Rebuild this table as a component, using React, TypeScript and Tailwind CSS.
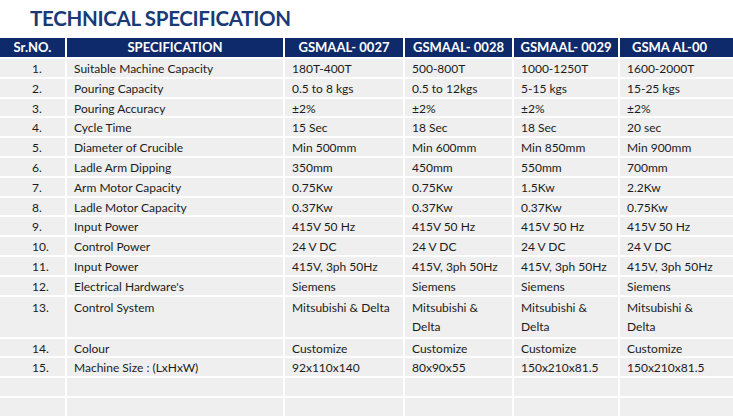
const rows: [string, string, string, string, string, string][] = [
  ["1.", "Suitable Machine Capacity", "180T-400T", "500-800T", "1000-1250T", "1600-2000T"],
  ["2.", "Pouring Capacity", "0.5 to 8 kgs", "0.5 to 12kgs", "5-15 kgs", "15-25 kgs"],
  ["3.", "Pouring Accuracy", "±2%", "±2%", "±2%", "±2%"],
  ["4.", "Cycle Time", "15 Sec", "18 Sec", "18 Sec", "20 sec"],
  ["5.", "Diameter of Crucible", "Min 500mm", "Min 600mm", "Min 850mm", "Min 900mm"],
  ["6.", "Ladle Arm Dipping", "350mm", "450mm", "550mm", "700mm"],
  ["7.", "Arm Motor Capacity", "0.75Kw", "0.75Kw", "1.5Kw", "2.2Kw"],
  ["8.", "Ladle Motor Capacity", "0.37Kw", "0.37Kw", "0.37Kw", "0.75Kw"],
  ["9.", "Input Power", "415V 50 Hz", "415V 50 Hz", "415V 50 Hz", "415V 50 Hz"],
  ["10.", "Control Power", "24 V DC", "24 V DC", "24 V DC", "24 V DC"],
  ["11.", "Input Power", "415V, 3ph 50Hz", "415V, 3ph 50Hz", "415V, 3ph 50Hz", "415V, 3ph 50Hz"],
  ["12.", "Electrical Hardware's", "Siemens", "Siemens", "Siemens", "Siemens"],
  ["13.", "Control System", "Mitsubishi & Delta", "Mitsubishi &\nDelta", "Mitsubishi &\nDelta", "Mitsubishi &\nDelta"],
  ["14.", "Colour", "Customize", "Customize", "Customize", "Customize"],
  ["15.", "Machine Size : (LxHxW)", "92x110x140", "80x90x55", "150x210x81.5", "150x210x81.5"],
  ["", "", "", "", "", ""],
  ["", "", "", "", "", ""],
];

const headers = ["Sr.NO.", "SPECIFICATION", "GSMAAL- 0027", "GSMAAL- 0028", "GSMAAL- 0029", "GSMA AL-00"];

const grid = "grid grid-cols-[65px_216px_118px_107px_104px_113px] gap-x-[2px]";

export default function App() {
  return (
    <div className="h-[420px] w-[733px] overflow-hidden bg-white font-['Lato',sans-serif] text-[12px] text-[#1c1c1c]">
      <h1 className="h-[38px] pl-[30px] pt-[3px] text-[20.5px] font-bold leading-[30px] tracking-[-0.3px] text-[#183a76]">
        TECHNICAL SPECIFICATION
      </h1>

      <div className="flex flex-col gap-y-[2px]">
        <div className={grid}>
          {headers.map((h, i) => (
            <div
              key={i}
              className={
                "h-[19px] overflow-hidden whitespace-nowrap bg-[#0f2a6a] text-[13px] font-bold leading-[19px] text-white " +
                (i === 5 ? "pl-[12px]" : "text-center")
              }
            >
              {h}
            </div>
          ))}
        </div>

        {rows.map((r, ri) => {
          const tall = ri === 12;
          return (
            <div key={ri} className={grid}>
              {r.map((c, ci) => (
                <div
                  key={ci}
                  className={
                    "whitespace-pre-line bg-[#efefef] leading-[19px] " +
                    (tall ? "h-[40px] pt-[1px] " : "h-[17.8px] ") +
                    (ci === 0 ? "pl-[32px]" : "pl-[7px]")
                  }
                >
                  {c}
                </div>
              ))}
            </div>
          );
        })}
      </div>
    </div>
  );
}
